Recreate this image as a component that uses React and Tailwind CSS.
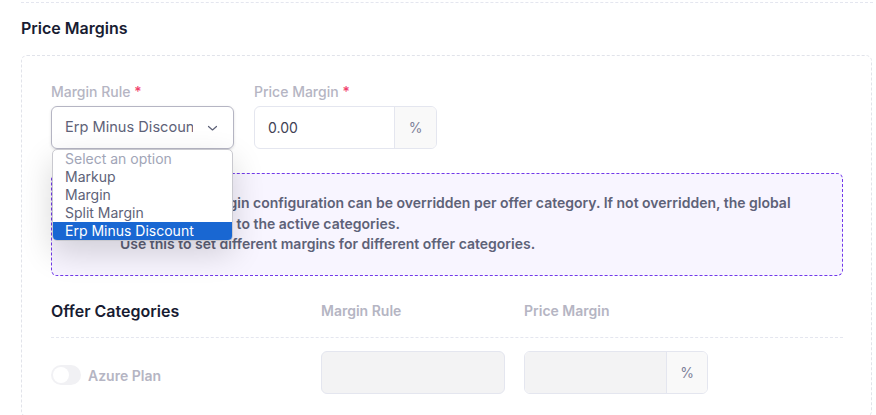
import React from "react";

const Chevron = () => (
  <svg width="13" height="12" viewBox="0 0 13 12" fill="none">
    <path d="M2.5 4.5 L6.5 8 L10.5 4.5" stroke="#5e6278" strokeWidth="1.2" strokeLinecap="round" strokeLinejoin="round" />
  </svg>
);

const options = ["Select an option", "Markup", "Margin", "Split Margin", "Erp Minus Discount"];

export default function App() {
  return (
    <div className="w-[876px] h-[415px] overflow-hidden bg-white font-['Inter',sans-serif]">
      <div className="mt-[2px] ml-[21px] mr-[3px] border-t border-dashed border-[#e4e6ef]"></div>
      <h2 className="mt-[13px] ml-[21px] text-[16px] leading-[24px] font-semibold text-[#181c32]">Price Margins</h2>

      <div className="mt-[15px] ml-[21px] w-[851px] border border-dashed border-[#e1e3ea] rounded-md pl-[29px] pr-[28px] pt-[26px]">
        {/* global margin */}
        <div className="flex gap-[20px]">
          <div className="w-[183px]">
            <label className="block text-[14px] leading-[20px] font-medium text-[#b5b5c3] mb-[4px]">
              Margin Rule <span className="text-[#f1416c]">*</span>
            </label>
            <div className="relative">
              <div className="h-[43px] border border-[#b5b5c3] rounded-md flex items-center pl-[13px] pr-[14px] shadow-[0_1px_3px_rgba(0,0,0,0.12)]">
                <div className="w-[128px] overflow-hidden whitespace-nowrap text-[14.6px] text-[#5e6278]">Erp Minus Discount</div>
                <div className="ml-auto flex items-center"><Chevron /></div>
              </div>
              <div className="absolute z-10 left-[1px] top-[43px] w-[181px] bg-white border border-[#c9c9cf] rounded-[5px] overflow-hidden shadow-[0_12px_32px_rgba(0,0,0,0.16)]">
                {options.map((o, i) => (
                  <div
                    key={o}
                    className={
                      i === 4
                        ? "h-[18px] leading-[18px] pl-[12px] text-[14px] bg-[#1967d2] text-white"
                        : i === 0
                        ? "h-[18px] leading-[18px] pl-[12px] text-[14px] text-[#a1a5b7]"
                        : "h-[18px] leading-[18px] pl-[12px] text-[14px] text-[#5e6278]"
                    }
                  >
                    {o}
                  </div>
                ))}
              </div>
            </div>
          </div>
          <div className="w-[183px]">
            <label className="block text-[14px] leading-[20px] font-medium text-[#b5b5c3] mb-[4px]">
              Price Margin <span className="text-[#f1416c]">*</span>
            </label>
            <div className="h-[43px] border border-[#e4e6ef] rounded-md flex overflow-hidden">
              <div className="flex-1 flex items-center pl-[13px] text-[14px] text-[#3f4254]">0.00</div>
              <div className="w-[42px] bg-[#f9f9f9] border-l border-[#e4e6ef] flex items-center justify-center text-[14px] text-[#7e8299]">%</div>
            </div>
          </div>
        </div>

        {/* notice */}
        <div className="mt-[24px] h-[103px] border border-dashed border-[#7239ea] rounded-md bg-[#f8f5ff] pt-[19px] text-[14px] leading-[20.5px] font-semibold text-[#5e6278] whitespace-nowrap">
          <div className="pl-[76px]">The global margin configuration can be overridden per offer category. If not overridden, the global</div>
          <div className="pl-[34px]">margin will be applied to the active categories.</div>
          <div className="pl-[68px]">Use this to set different margins for different offer categories.</div>
        </div>

        {/* offer categories */}
        <div className="mt-[23px] flex items-center pb-[14px] border-b border-dashed border-[#e4e6ef]">
          <div className="w-[270px] text-[16px] leading-[24px] font-semibold text-[#181c32]">Offer Categories</div>
          <div className="w-[203px] text-[14px] leading-[20px] font-semibold text-[#b5b5c3]">Margin Rule</div>
          <div className="text-[14px] leading-[20px] font-semibold text-[#b5b5c3]">Price Margin</div>
        </div>
        <div className="pt-[13px] pb-[21px] flex items-center border-b border-dashed border-[#e4e6ef]">
          <div className="w-[270px] flex items-center mt-[5px]">
            <div className="w-[30px] h-[20px] rounded-full bg-[#f1f1f4] flex items-center pl-[2px]">
              <div className="w-[16px] h-[16px] rounded-full bg-white"></div>
            </div>
            <span className="ml-[7px] text-[14px] font-semibold text-[#b5b5c3]">Azure Plan</span>
          </div>
          <div className="w-[184px] h-[43px] border border-[#e4e6ef] rounded-md bg-[#f3f3f4]"></div>
          <div className="ml-[19px] w-[184px] h-[43px] border border-[#e4e6ef] rounded-md flex overflow-hidden">
            <div className="flex-1 bg-[#f3f3f4]"></div>
            <div className="w-[41px] bg-[#f9f9f9] border-l border-[#e4e6ef] flex items-center justify-center text-[14px] text-[#7e8299]">%</div>
          </div>
        </div>
      </div>
    </div>
  );
}
